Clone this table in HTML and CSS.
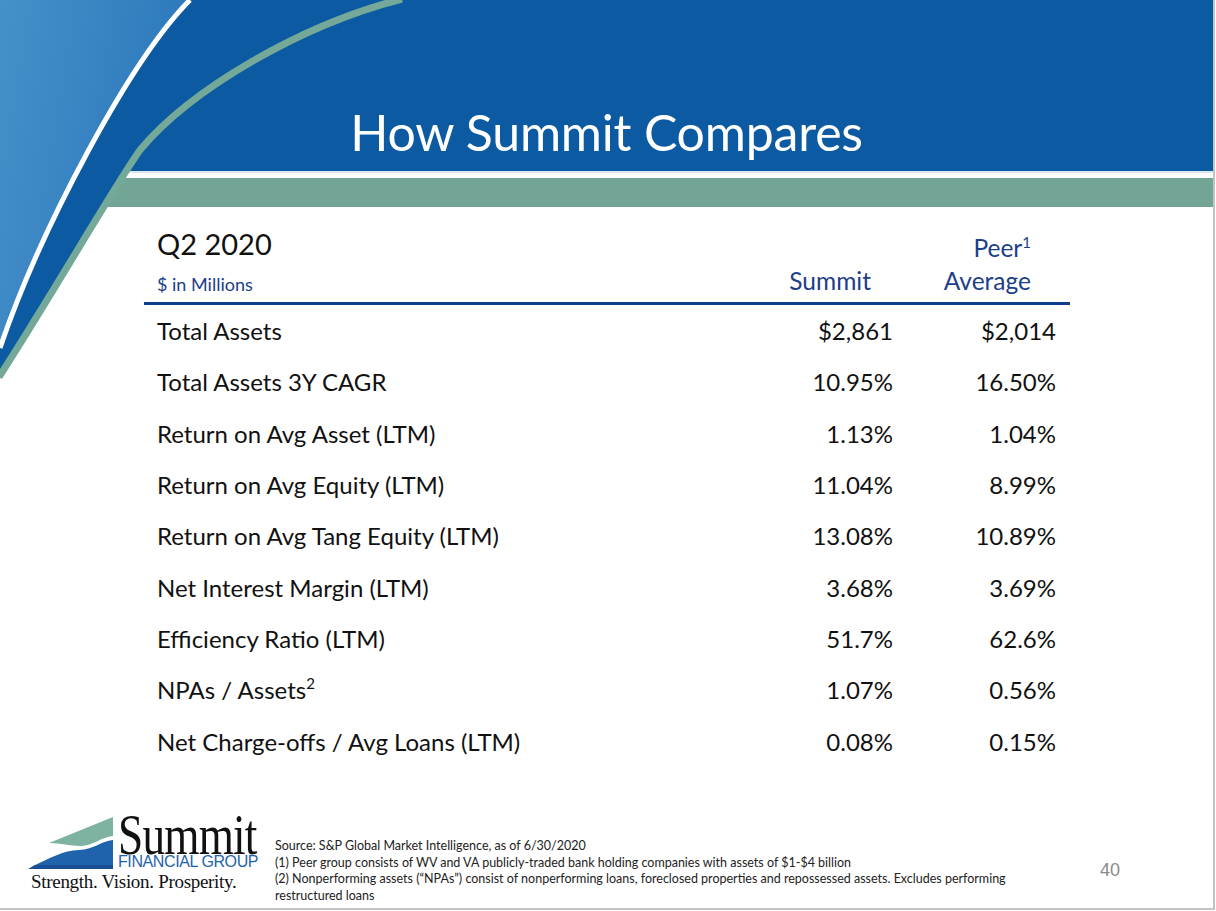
FILE: index.html
```html
<!DOCTYPE html>
<html lang="en">
<head>
<meta charset="utf-8">
<title>How Summit Compares</title>
<link rel="stylesheet" href="styles.css">
</head>
<body>
<div class="slide">
  <svg class="swoosh" width="420" height="400" viewBox="0 0 420 400" aria-hidden="true">
    <defs>
      <linearGradient id="lite" x1="0" y1="0" x2="1" y2="0.3">
        <stop offset="0" stop-color="#4690c9"/>
        <stop offset="1" stop-color="#2b78bb"/>
      </linearGradient>
    </defs>
    <path d="M0,0 L190,0 C130,60 40,230 0,348 Z" fill="url(#lite)"/>
    <path d="M190,0 L400,0 C300,25 190,90 140,150 C115,185 55,290 0,375 L0,348 C40,230 130,60 190,0 Z" fill="#0b5aa2"/>
    <path d="M190,0 C130,60 40,230 0,348" fill="none" stroke="#ffffff" stroke-width="5"/>
    <path d="M402,-1 C300,25 190,90 140,150 C115,185 55,290 -1,377" fill="none" stroke="#74a898" stroke-width="7"/>
  </svg>

  <header class="banner">
    <h1 class="title">How Summit Compares</h1>
  </header>
  <div class="stripe"></div>
  <div class="band"></div>

  <main class="content">
    <div class="metrics">
      <div class="head">
        <div class="head-label">
          <div class="period">Q2 2020</div>
          <div class="units">$ in Millions</div>
        </div>
        <div class="head-col">Summit</div>
        <div class="head-col head-peer"><span>Peer<sup>1</sup></span><span>Average</span></div>
      </div>

      <div class="row"><div class="label">Total Assets</div><div class="val">$2,861</div><div class="val">$2,014</div></div>
      <div class="row"><div class="label">Total Assets 3Y CAGR</div><div class="val">10.95%</div><div class="val">16.50%</div></div>
      <div class="row"><div class="label">Return on Avg Asset (LTM)</div><div class="val">1.13%</div><div class="val">1.04%</div></div>
      <div class="row"><div class="label">Return on Avg Equity (LTM)</div><div class="val">11.04%</div><div class="val">8.99%</div></div>
      <div class="row"><div class="label">Return on Avg Tang Equity (LTM)</div><div class="val">13.08%</div><div class="val">10.89%</div></div>
      <div class="row"><div class="label">Net Interest Margin (LTM)</div><div class="val">3.68%</div><div class="val">3.69%</div></div>
      <div class="row"><div class="label">Efficiency Ratio (LTM)</div><div class="val">51.7%</div><div class="val">62.6%</div></div>
      <div class="row"><div class="label">NPAs / Assets<sup>2</sup></div><div class="val">1.07%</div><div class="val">0.56%</div></div>
      <div class="row"><div class="label">Net Charge-offs / Avg Loans (LTM)</div><div class="val">0.08%</div><div class="val">0.15%</div></div>
    </div>
  </main>

  <footer class="foot">
    <div class="logo">
      <div class="logo-top">
        <svg class="mark" width="88" height="54" viewBox="0 0 88 54" aria-hidden="true">
          <path d="M22,28 L86,2 L86,21 C74,22 66,31 54,31 C42,31 34,28 22,28 Z" fill="#7db3a0"/>
          <path d="M6,51 C22,44 36,35 52,35 C66,35 74,26 86,25 L86,51 Z" fill="#1f63ad"/>
          <path d="M1,54 L86,54 L86,50 L8,50 Z" fill="#1a4f95"/>
        </svg>
        <div class="logo-words">
          <span class="logo-name">Summit</span>
          <span class="logo-sub">FINANCIAL GROUP</span>
        </div>
      </div>
      <div class="logo-tag">Strength. Vision. Prosperity.</div>
    </div>
    <div class="notes">
      <p>Source: S&amp;P Global Market Intelligence, as of 6/30/2020</p>
      <p>(1) Peer group consists of WV and VA publicly-traded bank holding companies with assets of $1-$4 billion</p>
      <p>(2) Nonperforming assets (“NPAs”) consist of nonperforming loans, foreclosed properties and repossessed assets. Excludes performing restructured loans</p>
    </div>
    <div class="page-num">40</div>
  </footer>
</div>
</body>
</html>
```

FILE: styles.css
```css
* { box-sizing: border-box; }

html, body {
  margin: 0;
  padding: 0;
  background: #ffffff;
}

body {
  font-family: Lato, "Open Sans", sans-serif;
  color: #111111;
}

.slide {
  position: relative;
  width: 1215px;
  height: 910px;
  background: #ffffff;
  border-right: 2px solid #c4c4c4;
  border-bottom: 2px solid #c4c4c4;
  overflow: hidden;
  display: flex;
  flex-direction: column;
}

.swoosh {
  position: absolute;
  left: 0;
  top: 0;
  z-index: 2;
  pointer-events: none;
}

.banner {
  height: 171px;
  background: #0b5aa2;
  display: flex;
  align-items: flex-end;
  justify-content: center;
  padding-bottom: 14px;
}

.title {
  margin: 0;
  font-family: Lato, sans-serif;
  font-weight: 400;
  font-size: 50px;
  line-height: 1;
  color: #ffffff;
  letter-spacing: -0.2px;
}

.stripe {
  height: 7px;
  background: #ffffff;
  border-top: 2px solid #dbe7f3;
}

.band {
  height: 29px;
  background: #72a596;
}

.content {
  padding: 0 0 0 144px;
}

.metrics {
  width: 926px;
}

.head {
  display: grid;
  grid-template-columns: 1fr 150px 163px;
  align-items: end;
  border-bottom: 3px solid #0e3f8a;
  padding: 19px 14px 7px 13px;
  color: #1d3e8a;
}

.period {
  font-size: 29px;
  color: #111111;
  line-height: 36px;
}

.units {
  font-size: 18px;
  line-height: 22px;
  margin-top: 11px;
}

.head-col {
  text-align: right;
  font-size: 24.5px;
  line-height: 29px;
  padding-right: 22px;
}

.head-peer {
  display: flex;
  flex-direction: column;
  align-items: flex-end;
  padding-right: 25px;
  gap: 4px;
}

.head-peer sup {
  font-size: 15px;
  line-height: 0;
  vertical-align: 9px;
}

.row {
  display: grid;
  grid-template-columns: 1fr 150px 163px;
  align-items: center;
  height: 51.3px;
  padding: 0 14px 0 13px;
  font-size: 24px;
}

.label sup {
  font-size: 15px;
  line-height: 0;
  vertical-align: 10px;
}

.val {
  text-align: right;
}

.foot {
  margin-top: auto;
  flex: none;
  height: 96px;
  display: flex;
  align-items: flex-start;
  padding-left: 27px;
}

.logo {
  width: 240px;
  flex: none;
  margin-top: 3px;
}

.logo-top {
  display: flex;
  align-items: flex-start;
}

.mark {
  flex: none;
  display: block;
}

.logo-words {
  display: flex;
  flex-direction: column;
  margin-left: 3px;
}

.logo-name {
  display: block;
  font-family: "Liberation Serif", serif;
  font-size: 58px;
  line-height: 39px;
  height: 39px;
  color: #111111;
  letter-spacing: -1px;
  transform: scaleX(0.78);
  transform-origin: left top;
  white-space: nowrap;
}

.logo-sub {
  display: block;
  font-family: "Liberation Sans", sans-serif;
  font-size: 16px;
  line-height: 15px;
  height: 15px;
  color: #1f63ad;
  letter-spacing: -0.4px;
  white-space: nowrap;
}

.logo-tag {
  font-family: "Liberation Serif", serif;
  font-size: 19px;
  line-height: 20px;
  margin-top: 3px;
  margin-left: 4px;
  letter-spacing: -0.3px;
  color: #111111;
  white-space: nowrap;
}

.notes {
  width: 760px;
  margin-left: 8px;
  margin-top: 26px;
  font-size: 12.5px;
  line-height: 16.7px;
  color: #222222;
}

.notes p {
  margin: 0;
}

.page-num {
  margin-left: 65px;
  margin-top: 48px;
  font-family: "Liberation Sans", sans-serif;
  font-size: 18px;
  line-height: 21px;
  color: #8a8a8a;
}
```
